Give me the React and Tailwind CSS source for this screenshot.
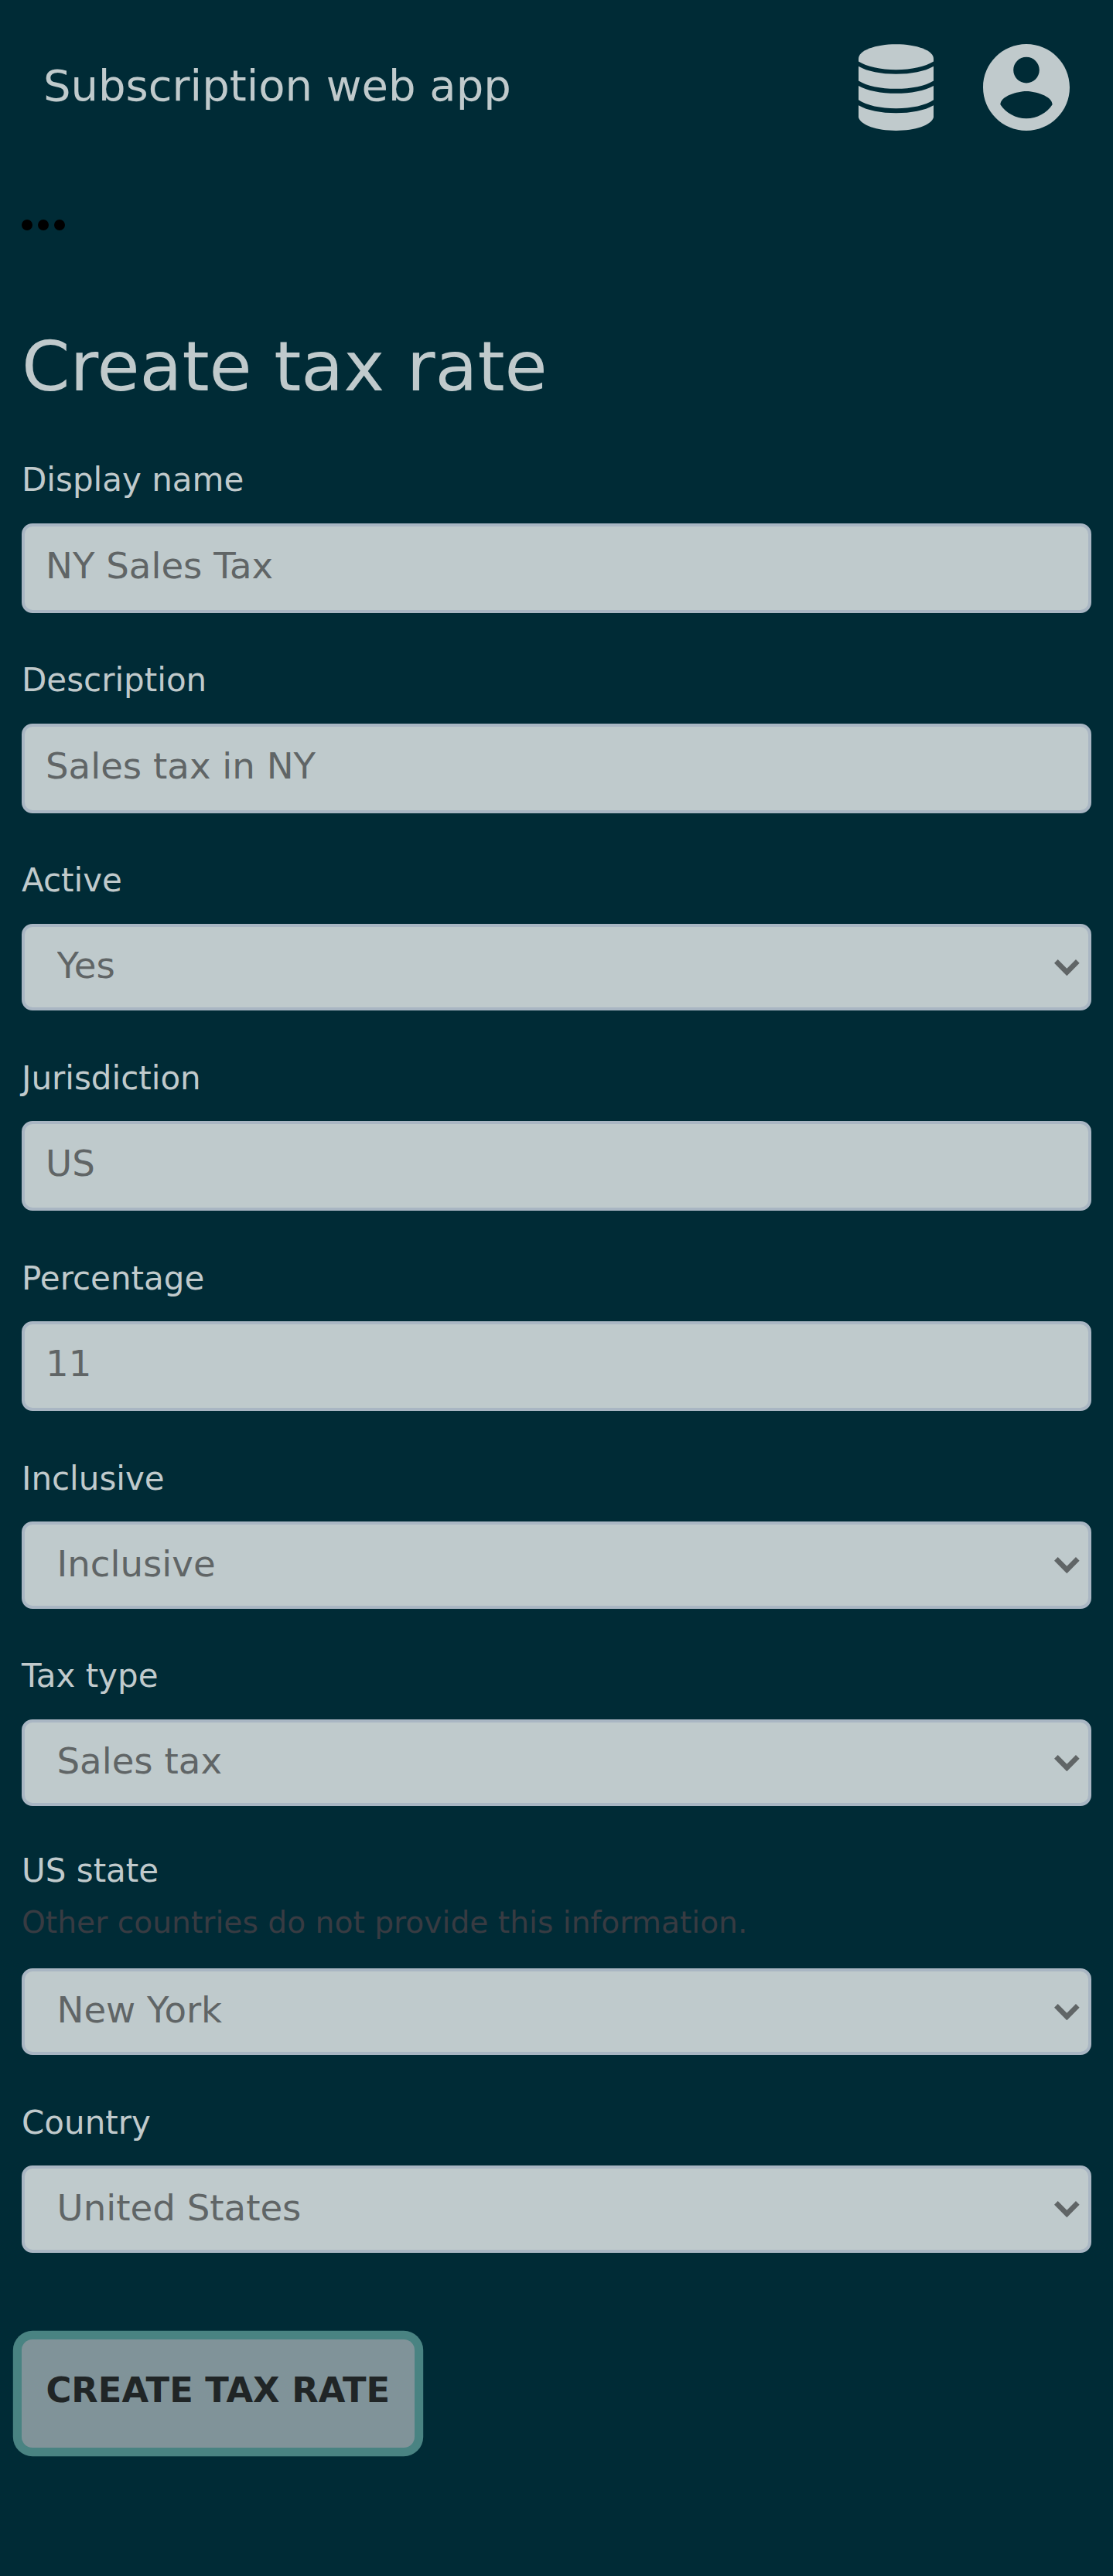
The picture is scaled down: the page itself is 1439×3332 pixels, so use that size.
const fields = [
  { label: "Display name", value: "NY Sales Tax" },
  { label: "Description", value: "Sales tax in NY" },
  { label: "Active", value: "Yes", select: true },
  { label: "Jurisdiction", value: "US" },
  { label: "Percentage", value: "11" },
  { label: "Inclusive", value: "Inclusive", select: true },
  { label: "Tax type", value: "Sales tax", select: true },
  {
    label: "US state",
    value: "New York",
    select: true,
    help: "Other countries do not provide this information.",
  },
  { label: "Country", value: "United States", select: true },
];

function DatabaseIcon() {
  return (
    <svg viewBox="90 80.5 291 336" preserveAspectRatio="none" className="h-28 w-[97px]" fill="currentColor">
      <path d="M90 137C90 105 155 81 235.5 81S381 105 381 137V148C350 168 295 180 235.5 180S121 168 90 148Z" />
      <path d="M90 167C124 187 178 197 235.5 197S347 187 381 167V223C350 243 295 254 235.5 254S121 243 90 223Z" />
      <path d="M90 242.5C124 262 178 272 235.5 272S347 262 381 242.5V297C350 318 295 330 235.5 330S121 318 90 297Z" />
      <path d="M90 318C124 338 178 348 235.5 348S347 338 381 318V365C372 396 310 416.5 235.5 416.5S99 396 90 365Z" />
    </svg>
  );
}

function AccountIcon() {
  return (
    <svg viewBox="2 2 20 20" className="size-28" fill="currentColor">
      <path d="M12 2C6.48 2 2 6.48 2 12s4.48 10 10 10 10-4.48 10-10S17.52 2 12 2zm0 3c1.66 0 3 1.34 3 3s-1.34 3-3 3-3-1.34-3-3 1.34-3 3-3zm0 14.2c-2.5 0-4.71-1.28-6-3.22.03-1.99 4-3.08 6-3.08 1.99 0 5.97 1.09 6 3.08-1.29 1.94-3.5 3.22-6 3.22z" />
    </svg>
  );
}

function Field({ label, value, select, help }) {
  return (
    <div className={help ? "pt-[58px]" : "pt-[61.5px]"}>
      <label className="block text-[42px] leading-[52px]">{label}</label>
      {help && (
        <p className="mt-[18px] mb-[6px] text-[39.2px] leading-[46px] text-[#383b42]">{help}</p>
      )}
      <div className="relative pt-[29.5px]">
        {select ? (
          <>
            <select
              defaultValue={value}
              className="block h-[112.5px] w-full appearance-none rounded-[14px] border-4 border-[#a9b6c3] bg-[#bfcacc] pr-16 pb-[3px] pl-[41.5px] text-[46.667px] text-[#606566] outline-none"
            >
              <option>{value}</option>
            </select>
            <svg
              viewBox="371 242 98 64"
              className="pointer-events-none absolute right-[15.5px] bottom-[45px] h-[21.3px] w-[32.7px]"
              fill="#606566"
            >
              <path d="M371 256L385 242L420 277L455 242L469 256L420 306Z" />
            </svg>
          </>
        ) : (
          <input
            defaultValue={value}
            className="block h-[116px] w-full rounded-[14px] border-4 border-[#a9b6c3] bg-[#bfcacc] px-[27px] pb-[6px] text-[46.667px] text-[#606566] outline-none"
          />
        )}
      </div>
    </div>
  );
}

export default function App() {
  return (
    <div className="h-[3332px] w-full overflow-hidden bg-[#002b36] font-['DejaVu_Sans',sans-serif] text-[#c0cacc]">
      <header className="flex h-[225px] items-center justify-between px-14">
        <span className="pb-[3px] text-[56px] leading-[66px]">Subscription web app</span>
        <div className="flex items-center gap-16">
          <DatabaseIcon />
          <AccountIcon />
        </div>
      </header>
      <main className="px-7">
        <div className="flex gap-[7px] pt-[59px]">
          <span className="size-3.5 rounded-full bg-black" />
          <span className="size-3.5 rounded-full bg-black" />
          <span className="size-3.5 rounded-full bg-black" />
        </div>
        <h1 className="mt-[124px] mb-[7.5px] text-[89.6px] leading-[104px]">Create tax rate</h1>
        <form>
          {fields.map((field) => (
            <Field key={field.label} {...field} />
          ))}
          <button
            type="button"
            className="mt-[112px] flex h-[140px] w-[507.5px] items-center justify-center rounded-[14px] bg-[#809399] pb-[8px] text-[44.8px] font-bold whitespace-nowrap text-[#202526] uppercase ring-[11.2px] ring-[#498382]"
          >
            Create tax rate
          </button>
        </form>
      </main>
    </div>
  );
}
